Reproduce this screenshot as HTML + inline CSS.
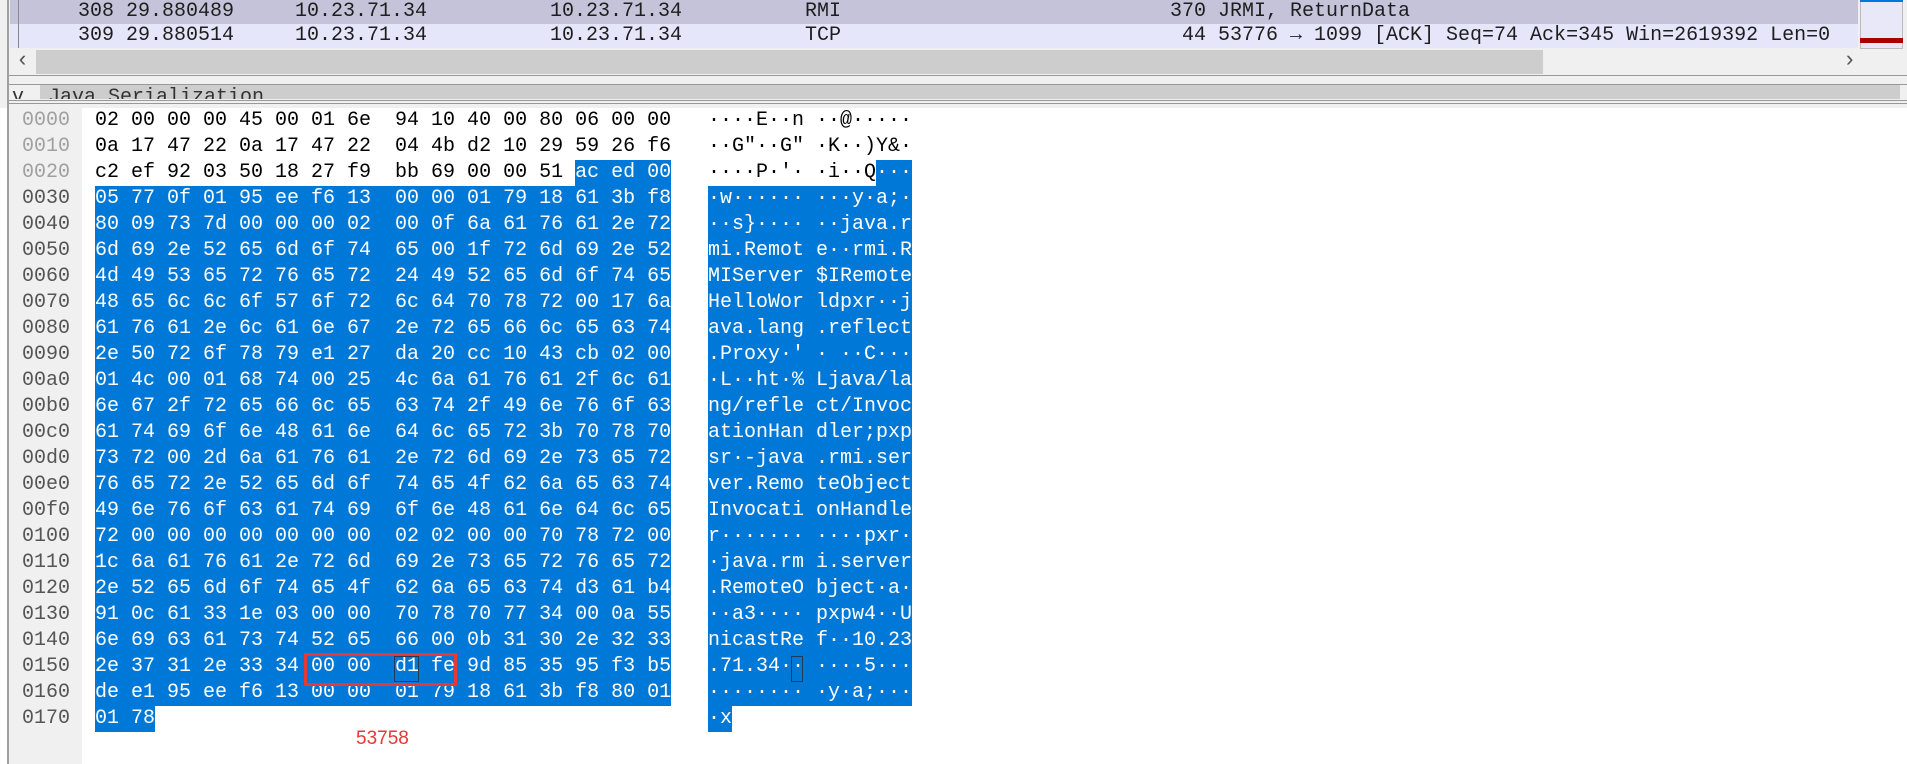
<!DOCTYPE html>
<html><head><meta charset="utf-8"><style>
*{margin:0;padding:0;box-sizing:border-box}
body{width:1907px;height:764px;overflow:hidden;background:#fff;position:relative;font-family:"Liberation Mono",monospace;font-size:20px;color:#000}
.a{position:absolute;white-space:pre}
.row{position:absolute;left:10px;width:1848px;height:24px;line-height:24px;color:#1e1e1e}
.h{position:absolute;left:95px;height:26px;line-height:26px;white-space:pre}
.o{position:absolute;left:22px;height:26px;line-height:26px;color:#555}
.s{background:#0078d7;color:#fff;display:inline-block;height:26px}
.t{position:absolute;white-space:pre;line-height:24px;color:#1e1e1e}
</style></head><body>
<div class="a" style="left:0;top:0;width:1907px;height:108px;background:#f0f0f0"></div>
<div class="row" style="top:0;background:#c5c3d9"></div>
<div class="row" style="top:24px;height:24px;background:#e6e6fa"></div>
<div class="a" style="left:7px;top:0;width:2px;height:764px;background:#a0a0a0"></div>
<div class="a" style="left:18px;top:0;width:1px;height:48px;background:#888"></div>
<div class="t" style="left:78px;top:0">308 29.880489</div>
<div class="t" style="left:295px;top:0">10.23.71.34</div>
<div class="t" style="left:550px;top:0">10.23.71.34</div>
<div class="t" style="left:805px;top:0">RMI</div>
<div class="t" style="left:1170px;top:0">370 JRMI, ReturnData</div>
<div class="t" style="left:78px;top:24px;height:24px;overflow:hidden">309 29.880514</div>
<div class="t" style="left:295px;top:24px;height:24px;overflow:hidden">10.23.71.34</div>
<div class="t" style="left:550px;top:24px;height:24px;overflow:hidden">10.23.71.34</div>
<div class="t" style="left:805px;top:24px;height:24px;overflow:hidden">TCP</div>
<div class="t" style="left:1182px;top:24px;height:24px;overflow:hidden">44 53776 → 1099 [ACK] Seq=74 Ack=345 Win=2619392 Len=0</div>
<div class="a" style="left:1860px;top:0;width:43px;height:49px;background:#e8e8f8;border:1px solid #bbb"></div>
<div class="a" style="left:1860px;top:0;width:43px;height:2px;background:#0078d7"></div>
<div class="a" style="left:1860px;top:38px;width:43px;height:5px;background:#a00"></div>
<div class="a" style="left:9px;top:50px;width:1851px;height:24px;background:#f0f0f0"></div>
<div class="a" style="left:36px;top:50px;width:1507px;height:24px;background:#cdcdcd"></div>
<div class="a" style="left:16px;top:48px;font-size:22px;color:#555;line-height:26px">‹</div>
<div class="a" style="left:1843px;top:48px;font-size:22px;color:#555;line-height:26px">›</div>
<div class="a" style="left:9px;top:75px;width:1898px;height:1px;background:#999"></div>
<div class="a" style="left:9px;top:84px;width:1898px;height:1px;background:#999"></div>
<div class="a" style="left:40px;top:85px;width:1860px;height:14px;background:#cdcdcd"></div>
<div class="a" style="left:12px;top:85px;height:14px;overflow:hidden;line-height:26px;color:#333">v  Java Serialization</div>
<div class="a" style="left:9px;top:100px;width:1898px;height:1px;background:#999"></div>
<div class="a" style="left:9px;top:103px;width:1898px;height:1px;background:#999"></div>
<div class="a" style="left:9px;top:108px;width:1898px;height:656px;background:#fff"></div>
<div class="a" style="left:9px;top:108px;width:73px;height:656px;background:#f0f0f0"></div>
<div id="hx"></div>
<div class="a" style="left:304px;top:653px;width:153px;height:33px;border:3px solid #e53935"></div>
<div class="a" style="left:394px;top:656px;width:25px;height:26px;border:1px solid #1c3a5a"></div>
<div class="a" style="left:791px;top:656px;width:12px;height:26px;border:1px solid #1c3a5a"></div>
<div class="a" style="left:356px;top:727px;color:#e53935;font-size:19px;line-height:24px;font-family:'Liberation Sans Narrow','Liberation Sans',sans-serif">53758</div>
<script>
var d=[
["02 00 00 00 45 00 01 6e  94 10 40 00 80 06 00 00","····E··n ··@·····",-1,-1],
["0a 17 47 22 0a 17 47 22  04 4b d2 10 29 59 26 f6","··G\"··G\" ·K··)Y&·",-1,-1],
["c2 ef 92 03 50 18 27 f9  bb 69 00 00 51 ac ed 00","····P·'· ·i··Q···",40,14],
["05 77 0f 01 95 ee f6 13  00 00 01 79 18 61 3b f8","·w······ ···y·a;·",0,0],
["80 09 73 7d 00 00 00 02  00 0f 6a 61 76 61 2e 72","··s}···· ··java.r",0,0],
["6d 69 2e 52 65 6d 6f 74  65 00 1f 72 6d 69 2e 52","mi.Remot e··rmi.R",0,0],
["4d 49 53 65 72 76 65 72  24 49 52 65 6d 6f 74 65","MIServer $IRemote",0,0],
["48 65 6c 6c 6f 57 6f 72  6c 64 70 78 72 00 17 6a","HelloWor ldpxr··j",0,0],
["61 76 61 2e 6c 61 6e 67  2e 72 65 66 6c 65 63 74","ava.lang .reflect",0,0],
["2e 50 72 6f 78 79 e1 27  da 20 cc 10 43 cb 02 00",".Proxy·' · ··C···",0,0],
["01 4c 00 01 68 74 00 25  4c 6a 61 76 61 2f 6c 61","·L··ht·% Ljava/la",0,0],
["6e 67 2f 72 65 66 6c 65  63 74 2f 49 6e 76 6f 63","ng/refle ct/Invoc",0,0],
["61 74 69 6f 6e 48 61 6e  64 6c 65 72 3b 70 78 70","ationHan dler;pxp",0,0],
["73 72 00 2d 6a 61 76 61  2e 72 6d 69 2e 73 65 72","sr·-java .rmi.ser",0,0],
["76 65 72 2e 52 65 6d 6f  74 65 4f 62 6a 65 63 74","ver.Remo teObject",0,0],
["49 6e 76 6f 63 61 74 69  6f 6e 48 61 6e 64 6c 65","Invocati onHandle",0,0],
["72 00 00 00 00 00 00 00  02 02 00 00 70 78 72 00","r······· ····pxr·",0,0],
["1c 6a 61 76 61 2e 72 6d  69 2e 73 65 72 76 65 72","·java.rm i.server",0,0],
["2e 52 65 6d 6f 74 65 4f  62 6a 65 63 74 d3 61 b4",".RemoteO bject·a·",0,0],
["91 0c 61 33 1e 03 00 00  70 78 70 77 34 00 0a 55","··a3···· pxpw4··U",0,0],
["6e 69 63 61 73 74 52 65  66 00 0b 31 30 2e 32 33","nicastRe f··10.23",0,0],
["2e 37 31 2e 33 34 00 00  d1 fe 9d 85 35 95 f3 b5",".71.34·· ····5···",0,0],
["de e1 95 ee f6 13 00 00  01 79 18 61 3b f8 80 01","········ ·y·a;···",0,0],
["01 78","·x",0,0]];
var h="";
function esc(s){return s.replace(/&/g,"&amp;").replace(/</g,"&lt;").replace(/"/g,"&quot;");}
function part(s,k){if(k<0)return esc(s);return esc(s.slice(0,k))+'<span class="s">'+esc(s.slice(k))+'</span>';}
for(var i=0;i<d.length;i++){var t=108+26*i;var r=d[i];
var off=(i*16).toString(16);while(off.length<4)off="0"+off;
h+='<div class="o" style="top:'+t+'px;color:'+(i<3?'#a0a0a0':'#555')+'">'+off+'</div>';
h+='<div class="h" style="top:'+t+'px">'+part(r[0],r[2])+'</div>';
h+='<div class="h" style="left:708px;top:'+t+'px">'+part(r[1],r[3])+'</div>';}
document.getElementById("hx").innerHTML=h;
</script>
</body></html>
